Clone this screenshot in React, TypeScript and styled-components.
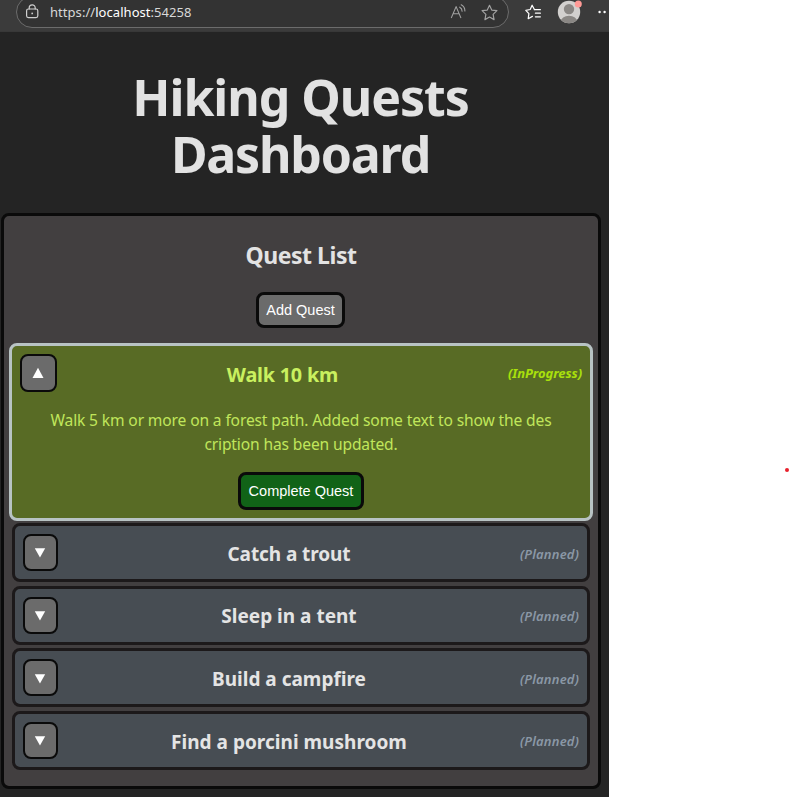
import React from 'react';
import styled, { createGlobalStyle } from 'styled-components';

const GlobalStyle = createGlobalStyle`
  *, *::before, *::after { box-sizing: border-box; }
  body { margin: 0; background: #fff; font-family: "Noto Sans", "Open Sans", sans-serif; }
  h1, h2, h3, p { margin: 0; }
  button { font: inherit; margin: 0; padding: 0; }
`;

const Screen = styled.div`
  display: flex;
  width: 790px;
  height: 797px;
  overflow: hidden;
  background: #fff;
`;

const Browser = styled.div`
  display: flex;
  flex-direction: column;
  width: 609px;
  height: 797px;
  background: #242424;
`;

const Gutter = styled.aside`
  flex: 1;
  display: flex;
  justify-content: flex-end;
  padding: 468px 1px 0 0;
`;

const Dot = styled.span`
  width: 4px;
  height: 4px;
  border-radius: 50%;
  background: #e8202c;
`;

const Toolbar = styled.header`
  flex: none;
  display: flex;
  height: 32px;
  padding-left: 16px;
  background: #3b3b3b;
  border-bottom: 1px solid #383838;
  overflow: hidden;
`;

const AddressBar = styled.div`
  display: flex;
  align-items: center;
  width: 493px;
  height: 32px;
  margin-top: -4px;
  padding: 0 10px 0 8px;
  background: #333;
  border: 1px solid #6c6c6c;
  border-radius: 16px;
`;

const Url = styled.span`
  flex: 1;
  margin-left: 10px;
  color: #d8d8d8;
  font-size: 13px;
  line-height: 18px;
  letter-spacing: 0.05px;
  b { font-weight: 400; color: #fff; }
`;

const Icon = styled.svg<{ $gap?: number }>`
  flex: none;
  display: block;
  margin-left: ${p => p.$gap ?? 0}px;
  fill: none;
  stroke-linecap: round;
  stroke-linejoin: round;
`;

const Actions = styled.div`
  display: flex;
  align-items: center;
  height: 24px;
  padding-left: 16px;
`;

const Title = styled.h1`
  flex: none;
  display: flex;
  flex-direction: column;
  align-items: center;
  width: 601px;
  padding: 37px 0 30px;
  color: #e2e2e2;
  font-size: 50px;
  line-height: 57px;
  font-weight: 700;
`;

const TitleLine = styled.span<{ $tracking: number }>`
  letter-spacing: ${p => p.$tracking}px;
`;

const Panel = styled.main`
  flex: none;
  display: flex;
  flex-direction: column;
  align-items: center;
  width: 600px;
  height: 576px;
  margin-left: 1px;
  padding-top: 24px;
  background: #423f40;
  border: 3px solid #0a0a0a;
  border-radius: 8px;
`;

const PanelTitle = styled.h2`
  color: #e3e3e3;
  font-size: 23px;
  line-height: 30px;
  letter-spacing: -0.45px;
`;

const ActionButton = styled.button<{ $width: number; $height: number; $fill: string }>`
  width: ${p => p.$width}px;
  height: ${p => p.$height}px;
  background: ${p => p.$fill};
  border: 3px solid #0a0a0a;
  border-radius: 8px;
  color: #fff;
  font-family: "Liberation Sans", Arial, sans-serif;
  font-size: 14.5px;
  line-height: 17px;
  white-space: nowrap;
`;

const AddSlot = styled.div`
  margin: 22px 1px 15px 0;
  display: flex;
`;

const Quests = styled.div`
  display: flex;
  flex-direction: column;
  align-items: center;
`;

const ActiveCard = styled.section`
  display: flex;
  flex-direction: column;
  align-items: center;
  width: 584px;
  height: 178px;
  padding: 8px 8px 0;
  margin-bottom: 2.2px;
  background: #586b25;
  border: 3px solid #b8c3c4;
  border-radius: 8px;
`;

const Card = styled.section`
  display: flex;
  width: 578px;
  height: 59px;
  margin-bottom: 3.6px;
  padding: 7.8px 8px 0;
  background: #474d53;
  border: 3px solid #1c191a;
  border-radius: 8px;
`;

const Row = styled.div`
  display: flex;
  align-items: center;
  width: 100%;
  height: 37px;
`;

const Toggle = styled.button<{ $large?: boolean }>`
  flex: none;
  display: flex;
  align-items: center;
  justify-content: center;
  width: ${p => (p.$large ? 37 : 35)}px;
  height: ${p => (p.$large ? 38 : 37)}px;
  padding-right: 1px;
  background: #6b6b6b;
  border: 2px solid #0a0a0a;
  border-radius: 8px;
`;

const QuestName = styled.h3<{ $active?: boolean; $tracking?: number }>`
  flex: 1;
  text-align: center;
  color: ${p => (p.$active ? '#c9f05f' : '#e4e4e4')};
  font-size: ${p => (p.$active ? 19.8 : 19)}px;
  line-height: 26px;
  padding-top: ${p => (p.$active ? 4 : 2.6)}px;
  letter-spacing: ${p => p.$tracking ?? 0}px;
`;

const Status = styled.em<{ $active?: boolean }>`
  color: ${p => (p.$active ? '#a9e00c' : '#8b98a6')};
  font-size: 13px;
  font-weight: ${p => (p.$active ? 700 : 600)};
  line-height: 18px;
  letter-spacing: ${p => (p.$active ? -0.08 : 0.18)}px;
  padding-top: ${p => (p.$active ? 0 : 2.4)}px;
`;

const Description = styled.p`
  display: flex;
  flex-direction: column;
  align-items: center;
  margin: 17px 0 16px;
  color: #c0e65b;
  font-size: 15.6px;
  line-height: 24px;
  letter-spacing: -0.14px;
  white-space: nowrap;
`;

const Arrow = ({ up }: { up?: boolean }) => (
  <Icon width="12" height="12" viewBox="0 0 12 12">
    <path d={up ? 'M0.5 11L6 0.8L11.5 11Z' : 'M0.8 2.2H11.2L6 11.6Z'} fill="#fff" />
  </Icon>
);

const STAR = 'M8 1.2L10.1 5.7L15 6.3L11.4 9.7L12.3 14.7L8 12.3L3.7 14.7L4.6 9.7L1 6.3L5.9 5.7Z';

const planned = [
  { name: 'Catch a trout', tracking: -0.08 },
  { name: 'Sleep in a tent', tracking: 0 },
  { name: 'Build a campfire', tracking: 0 },
  { name: 'Find a porcini mushroom', tracking: 0.02 },
];

export default function App() {
  return (
    <>
      <GlobalStyle />
      <Screen>
        <Browser>
          <Toolbar>
            <AddressBar>
              <Icon width="15" height="16" viewBox="0 0 15 16" stroke="#cfcfcf" strokeWidth="1.2">
                <rect x="1.6" y="5" width="11.2" height="8.6" rx="1.8" />
                <path d="M4.2 5V3.8a3 3 0 0 1 6 0V5" />
                <circle cx="7.2" cy="9.4" r="0.9" fill="#cfcfcf" stroke="none" />
              </Icon>
              <Url>https://<b>localhost</b>:54258</Url>
              <Icon width="18" height="16" viewBox="0 0 18 16" stroke="#a2a2a2" strokeWidth="1.1">
                <path d="M1.4 13.6L6.1 2.6L10.8 13.6M3 9.8H9.2" />
                <path d="M9.7 3.2a4.5 4.5 0 0 1 2.4 4M11.2 .8a7 7 0 0 1 3.7 6.2" />
              </Icon>
              <Icon $gap={13} width="17" height="17" viewBox="0 0 16 16" stroke="#a2a2a2" strokeWidth="1.1">
                <path d={STAR} />
              </Icon>
            </AddressBar>
            <Actions>
              <Icon width="17" height="17" viewBox="0 0 17 17" stroke="#fff" strokeWidth="1.2">
                <path d="M9.4 5.5L7.1 1.2L5.2 5.5L.8 6.3L3.9 9.7L3.2 14.7L7.4 12.4" />
                <path d="M9.4 5.7H15.4M10.4 9.2H15.4M10.4 12.8H15.4" />
              </Icon>
              <Icon $gap={15} width="25" height="25" viewBox="0 0 25 25">
                <clipPath id="avatar"><circle cx="12" cy="12" r="11.2" /></clipPath>
                <circle cx="12" cy="12" r="11.2" fill="#d2d0ce" />
                <g clipPath="url(#avatar)" fill="#8a8784">
                  <circle cx="12" cy="9.1" r="5.2" />
                  <ellipse cx="12" cy="22" rx="8.3" ry="6.3" />
                </g>
                <circle cx="21.3" cy="4" r="3.5" fill="#ff9a96" />
              </Icon>
              <Icon $gap={15} width="12" height="4" viewBox="0 0 12 4">
                <g fill="#fff">
                  <circle cx="2.6" cy="2" r="1.2" />
                  <circle cx="7.6" cy="2" r="1.2" />
                </g>
              </Icon>
            </Actions>
          </Toolbar>
          <Title>
            <TitleLine $tracking={-1.05}>Hiking Quests</TitleLine>
            <TitleLine $tracking={-1.2}>Dashboard</TitleLine>
          </Title>
          <Panel>
            <PanelTitle>Quest List</PanelTitle>
            <AddSlot>
              <ActionButton $width={89} $height={36} $fill="#6b6b6b">Add Quest</ActionButton>
            </AddSlot>
            <Quests>
              <ActiveCard>
                <Row>
                  <Toggle $large><Arrow up /></Toggle>
                  <QuestName $active $tracking={-0.2}>Walk 10 km</QuestName>
                  <Status $active>(InProgress)</Status>
                </Row>
                <Description>
                  <span>Walk 5 km or more on a forest path. Added some text to show the des</span>
                  <span>cription has been updated.</span>
                </Description>
                <ActionButton $width={126} $height={38} $fill="#116317">Complete Quest</ActionButton>
              </ActiveCard>
              {planned.map(q => (
                <Card key={q.name}>
                  <Row>
                    <Toggle><Arrow /></Toggle>
                    <QuestName $tracking={q.tracking}>{q.name}</QuestName>
                    <Status>(Planned)</Status>
                  </Row>
                </Card>
              ))}
            </Quests>
          </Panel>
        </Browser>
        <Gutter><Dot /></Gutter>
      </Screen>
    </>
  );
}
